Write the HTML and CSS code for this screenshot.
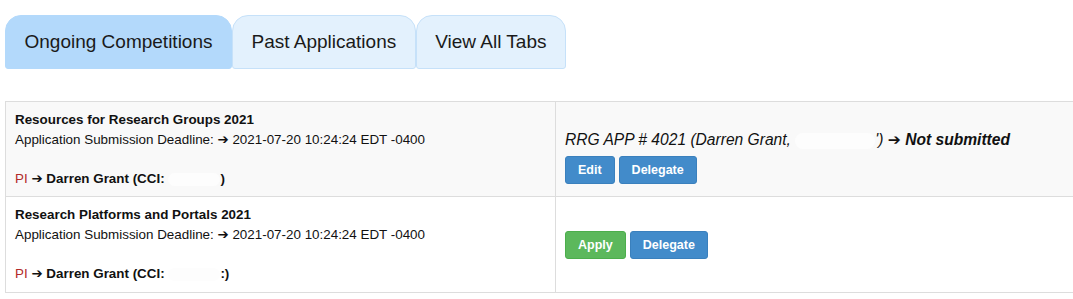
FILE: index.html
```html
<!DOCTYPE html>
<html lang="en">
<head>
  <meta charset="UTF-8">
  <meta name="viewport" content="width=device-width, initial-scale=1.0">
  <title>Competitions</title>
  <link rel="stylesheet" href="styles.css">
</head>
<body>
  <div class="page">
    <div class="tabs">
      <div class="tab active">Ongoing Competitions</div>
      <div class="tab">Past Applications</div>
      <div class="tab">View All Tabs</div>
    </div>

    <table class="competitions">
      <tr class="odd">
        <td class="info">
          <b>Resources for Research Groups 2021</b><br>
          Application Submission Deadline: <span class="arrow">&#10132;</span> 2021-07-20 10:24:24 EDT -0400<br>
          <br>
          <span class="pi">PI</span> <b><span class="arrow">&#10132;</span> Darren Grant (CCI: <span class="hidden-id"></span>)</b>
        </td>
        <td class="actions top">
          <div class="app-line">
            RRG APP # 4021 (Darren Grant, <span class="hidden-id wide"></span>') <span class="arrow">&#10132;</span> <b>Not submitted</b>
          </div>
          <div class="buttons">
            <button class="btn primary">Edit</button>
            <button class="btn primary">Delegate</button>
          </div>
        </td>
      </tr>
      <tr>
        <td class="info">
          <b>Research Platforms and Portals 2021</b><br>
          Application Submission Deadline: <span class="arrow">&#10132;</span> 2021-07-20 10:24:24 EDT -0400<br>
          <br>
          <span class="pi">PI</span> <b><span class="arrow">&#10132;</span> Darren Grant (CCI: <span class="hidden-id"></span>:)</b>
        </td>
        <td class="actions">
          <div class="buttons">
            <button class="btn success">Apply</button>
            <button class="btn primary">Delegate</button>
          </div>
        </td>
      </tr>
    </table>
  </div>
</body>
</html>
```

FILE: styles.css
```css
body {
  margin: 0;
  background-color: #ffffff;
  font-family: 'Liberation Sans', Arial, Helvetica, sans-serif;
  color: #111;
}
.page{
  padding: 15px 0 0 5px;
  overflow: hidden;
}
.tabs{
  display: flex;
  height: 54px;
}
.tab{
  display: flex;
  align-items: center;
  padding: 0 18.5px;
  font-size: 19px;
  color: #1a1a1a;
  background-color: #e3f1fd;
  border: 1px solid #c6e1f9;
  border-radius: 16px 16px 3px 3px;
}
.tab.active{
  background-color: #b3d9fb;
  border-color: #b3d9fb;
}
.competitions{
  margin-top: 32px;
  width: 1200px;
  border-collapse: collapse;
  font-size: 13.4px;
  line-height: 19.6px;
}
.competitions td{
  border: 1px solid #dddddd;
  padding: 8px 9px;
}
.competitions tr.odd{
  background-color: #f9f9f9;
}
.info{
  width: 531px;
  vertical-align: top;
}
.arrow{
  font-family: 'DejaVu Sans', sans-serif;
  font-size: 1em;
  line-height: 0;
}
.pi{
  color: #b22a2a;
}
.hidden-id{
  display: inline-block;
  width: 52px;
  height: 1em;
  vertical-align: middle;
  background-color: #fdfdfd;
  border-radius: 8px;
}
.hidden-id.wide{
  width: 80px;
}
.actions{
  vertical-align: middle;
}
.actions.top{
  vertical-align: top;
  padding-top: 28px;
}
.app-line{
  font-size: 15.6px;
  font-style: italic;
  line-height: 20px;
}
.app-line .arrow{
  font-style: normal;
}
.buttons{
  display: flex;
  gap: 4px;
  margin-top: 6px;
}
.actions:not(.top) .buttons{
  margin-top: 0;
}
.btn{
  font-family: inherit;
  font-size: 12.5px;
  font-weight: bold;
  line-height: 18px;
  padding: 4px 12px;
  color: #ffffff;
  border: 1px solid;
  border-radius: 3px;
  cursor: pointer;
}
.primary{
  background-color: #428bca;
  border-color: #3a80bd;
}
.success{
  background-color: #5cb85c;
  border-color: #4cae4c;
}
```
